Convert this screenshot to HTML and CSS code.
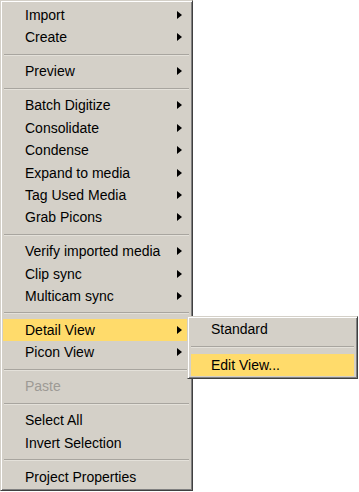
FILE: index.html
```html
<!DOCTYPE html>
<html lang="en">
<head>
    <meta charset="UTF-8">
    <title>Bin Menu</title>
    <link rel="stylesheet" href="styles.css">
</head>
<body>
    <div class="menu main-menu">
        <div class="item sub">Import</div>
        <div class="item sub">Create</div>
        <div class="sep"></div>
        <div class="item sub">Preview</div>
        <div class="sep"></div>
        <div class="item sub">Batch Digitize</div>
        <div class="item sub">Consolidate</div>
        <div class="item sub">Condense</div>
        <div class="item sub">Expand to media</div>
        <div class="item sub">Tag Used Media</div>
        <div class="item sub">Grab Picons</div>
        <div class="sep"></div>
        <div class="item sub">Verify imported media</div>
        <div class="item sub">Clip sync</div>
        <div class="item sub">Multicam sync</div>
        <div class="sep"></div>
        <div class="item sub active">Detail View</div>
        <div class="item sub">Picon View</div>
        <div class="sep"></div>
        <div class="item disabled">Paste</div>
        <div class="sep"></div>
        <div class="item">Select All</div>
        <div class="item">Invert Selection</div>
        <div class="sep"></div>
        <div class="item">Project Properties</div>
    </div>

    <!-- submenu of Detail View -->
    <div class="menu sub-menu">
        <div class="item">Standard</div>
        <div class="sep"></div>
        <div class="item active">Edit View...</div>
    </div>
</body>
</html>
```

FILE: styles.css
```css
body {
    margin: 0;
    background: #ffffff;
    font-family: 'Liberation Sans', Arial, sans-serif;
    font-size: 14px;
    color: #000000;
    position: relative;
    width: 359px;
    height: 492px;
    overflow: hidden;
}

.menu {
    background: #d4d0c8;
    border-top: 1px solid #d4d0c8;
    border-left: 1px solid #d4d0c8;
    border-right: 1px solid #404040;
    border-bottom: 1px solid #404040;
    box-shadow: inset 1px 1px 0 #ffffff, inset -1px -1px 0 #808080;
    box-sizing: border-box;
    padding: 3px 3px 1px 2px;
}

.main-menu {
    width: 193px;
    height: 491px;
}

.sub-menu {
    position: absolute;
    left: 187px;
    top: 316px;
    width: 171px;
    height: 63px;
    padding: 1px 3px 1px 3px;
}

.item {
    height: 22.4px;
    line-height: 22.4px;
    padding-left: 22px;
    position: relative;
    white-space: nowrap;
}

.sub-menu .item {
    padding-left: 20px;
    height: 22px;
    line-height: 22px;
}

.item.sub::after {
    content: "";
    position: absolute;
    left: 174px;
    top: 7px;
    border-left: 5px solid #000000;
    border-top: 4px solid transparent;
    border-bottom: 4px solid transparent;
}

.item.active {
    background: #ffdb6b;
}

.item.disabled {
    color: #9d9a95;
}

.sep {
    height: 2px;
    margin: 4.8px 0 4.8px 1px;
    background: #a8a59f;
    border-bottom: 1px solid #e4e1da;
    box-sizing: border-box;
}

.sub-menu .sep {
    margin: 6px 0 6px 0;
}
```
